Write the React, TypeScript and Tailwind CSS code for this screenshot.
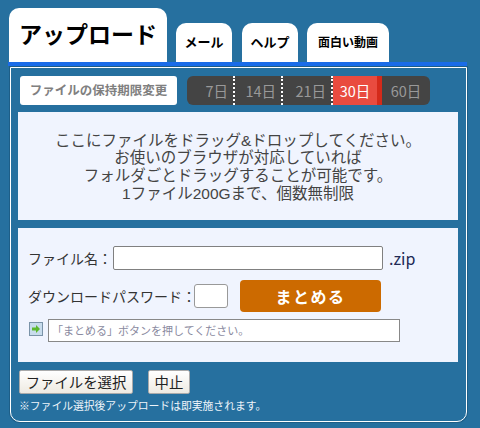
function Tab({ label, className }: { label: string; className: string }) {
  return (
    <div className={`flex items-center justify-center rounded-t-[10px] bg-white font-bold text-black ${className}`}>
      {label}
    </div>
  );
}

export default function App() {
  const days = [
    { label: '7日', w: 'w-[48px]' },
    { label: '14日', w: 'w-[48px]' },
    { label: '21日', w: 'w-[50px]' },
  ];

  return (
    <div className="h-[428px] w-[480px] overflow-hidden bg-[#26709f] pt-2 pl-2 font-['Noto_Sans_CJK_JP',sans-serif]">
      <div className="ml-px flex h-[54px] items-end">
        <Tab label="アップロード" className="h-[54px] w-[158px] pb-1 text-[23px]" />
        <Tab label="メール" className="ml-[9px] h-[39px] w-[56px] pb-[2px] text-[13px]" />
        <Tab label="ヘルプ" className="ml-[10px] h-[39px] w-[56px] pb-[2px] text-[13px]" />
        <Tab label="面白い動画" className="ml-[9px] h-[39px] w-[82px] pb-[2px] text-[12px]" />
      </div>
      <div className="h-1 w-[459px] bg-[#1a6ce8]" />
      <div className="mt-px ml-[2px] h-[355px] w-[457px] rounded-b-[10px] border border-white pt-[8px] pl-[7px] shadow-[0_0_0_1px_#1e5e87]">
        <div className="flex h-[29px]">
          <div className="ml-[2px] flex w-[157px] items-center justify-center rounded-[3px] bg-white text-[12.5px] font-bold text-[#808080]">
            ファイルの保持期限変更
          </div>
          <div className="ml-[10px] flex w-[243px] overflow-hidden rounded-[6px] bg-[#444444] text-[14.5px] text-[#999999]">
            {days.map((d) => (
              <div key={d.label} className={`flex items-center justify-end border-r-2 border-dotted border-white pr-[5px] ${d.w}`}>
                {d.label}
              </div>
            ))}
            <div className="flex w-[49px] items-center justify-center border-r-[5px] border-[#d42a1a] bg-[#e94b3f] text-white">
              30日
            </div>
            <div className="flex flex-1 items-center justify-center">60日</div>
          </div>
        </div>
        <div className="mt-[7px] flex h-[108px] w-[440px] flex-col items-center justify-center bg-[#f0f4fe] pt-[2px] font-['Liberation_Sans','Noto_Sans_CJK_JP',sans-serif] text-[15.5px] leading-[17.7px] text-[#444444]">
          <p>ここにファイルをドラッグ&amp;ドロップしてください。</p>
          <p>お使いのブラウザが対応していれば</p>
          <p>フォルダごとドラッグすることが可能です。</p>
          <p>1ファイル200Gまで、個数無制限</p>
        </div>
        <div className="mt-[8px] h-[134px] w-[440px] bg-[#f0f4fe] pt-[18px] pl-[10px] text-[#333333]">
          <div className="flex h-[24px] items-center">
            <span className="w-[85px] text-[14px]">ファイル名：</span>
            <input readOnly className="h-[24px] w-[270px] rounded-[2px] border border-[#808080] bg-white" />
            <span className="ml-[6px] text-[16px] text-[#222a55]">.zip</span>
          </div>
          <div className="mt-[10px] flex h-[32px] items-center">
            <span className="w-[166px] text-[14px] whitespace-nowrap">ダウンロードパスワード：</span>
            <input readOnly className="h-[24px] w-[34px] rounded-[3px] border border-[#999999] bg-white" />
            <div className="ml-[12px] flex h-[32px] w-[141px] items-center justify-center rounded-[4px] bg-[#cc6a00] text-[16px] font-bold tracking-[1.5px] text-white">
              まとめる
            </div>
          </div>
          <div className="mt-[7px] flex h-[23px] items-center">
            <svg width="14" height="14" viewBox="0 0 14 14" className="mr-[5px] ml-[1px] -translate-y-[2px]">
              <rect x="0.5" y="0.5" width="13" height="13" fill="#c8dcec" stroke="#7a93a8" />
              <path d="M3 5.5h4V3l4 4-4 4V8.5H3z" fill="#5cb82e" />
            </svg>
            <div className="flex h-[23px] w-[352px] items-center border border-[#888888] bg-white pl-[3px] text-[11px] text-[#8a8aa0]">
              「まとめる」ボタンを押してください。
            </div>
          </div>
        </div>
        <div className="mt-[8px] ml-px flex h-[24px]">
          <button className="flex w-[114px] items-center justify-center rounded-[2px] border border-[#aaaaaa] bg-linear-to-b from-[#ffffff] to-[#eeeae2] text-[14.4px] text-[#222222]">
            ファイルを選択
          </button>
          <button className="ml-[15px] flex w-[42px] items-center justify-center rounded-[2px] border border-[#aaaaaa] bg-linear-to-b from-[#ffffff] to-[#eeeae2] text-[14.4px] text-[#222222]">
            中止
          </button>
        </div>
        <p className="mt-[3px] ml-px text-[10.8px] text-[#eef4fa]">※ファイル選択後アップロードは即実施されます。</p>
      </div>
    </div>
  );
}
